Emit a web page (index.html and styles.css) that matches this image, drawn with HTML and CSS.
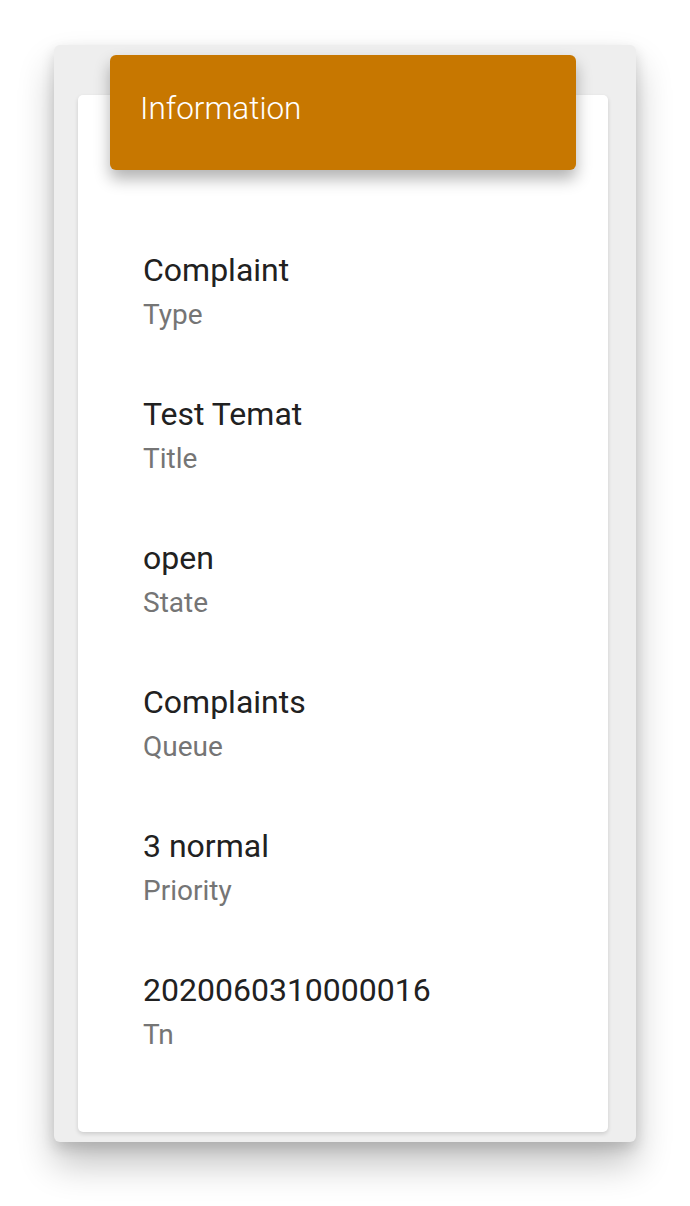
FILE: index.html
```html
<!DOCTYPE html>
<html>
<head>
<meta charset="utf-8">
<link rel="stylesheet" href="styles.css">
</head>
<body>
<div class="panel">
  <div class="header">Information</div>
  <div class="card">
    <ul class="list">
      <li class="item"><div class="value">Complaint</div><div class="label">Type</div></li>
      <li class="item"><div class="value">Test Temat</div><div class="label">Title</div></li>
      <li class="item"><div class="value">open</div><div class="label">State</div></li>
      <li class="item"><div class="value">Complaints</div><div class="label">Queue</div></li>
      <li class="item"><div class="value">3 normal</div><div class="label">Priority</div></li>
      <li class="item"><div class="value">2020060310000016</div><div class="label">Tn</div></li>
    </ul>
  </div>
</div>
</body>
</html>
```

FILE: styles.css
```css
html, body {
  margin: 0;
  padding: 0;
  background: #ffffff;
  font-family: Roboto, "Noto Sans", sans-serif;
}
body {
  box-sizing: border-box;
  min-height: 1206px;
  padding: 45px 54px 65px 54px;
}
.panel {
  position: relative;
  width: 582px;
  box-sizing: border-box;
  background: #eeeeee;
  border-radius: 6px;
  padding: 50px 28px 10px 24px;
  box-shadow: 0 22px 36px rgba(0,0,0,0.24), 0 6px 14px rgba(0,0,0,0.14);
}
.header {
  position: absolute;
  left: 56px;
  top: 10px;
  width: 466px;
  height: 115px;
  box-sizing: border-box;
  background: #c77700;
  border-radius: 6px;
  color: #ffffff;
  font-weight: 300;
  font-size: 31.5px;
  padding: 34px 0 0 30px;
  line-height: 40px;
  box-shadow: 0 9px 16px rgba(0,0,0,0.3);
}
.card {
  background: #ffffff;
  border-radius: 5px;
  box-shadow: 0 2px 4px rgba(0,0,0,0.14);
}
.list {
  list-style: none;
  margin: 0;
  padding: 126px 0 47px 65px;
}
.item {
  padding: 27px 0;
}
.value {
  font-size: 32px;
  line-height: 44px;
  color: #212121;
}
.label {
  font-size: 28px;
  line-height: 46px;
  color: #757575;
}
```
